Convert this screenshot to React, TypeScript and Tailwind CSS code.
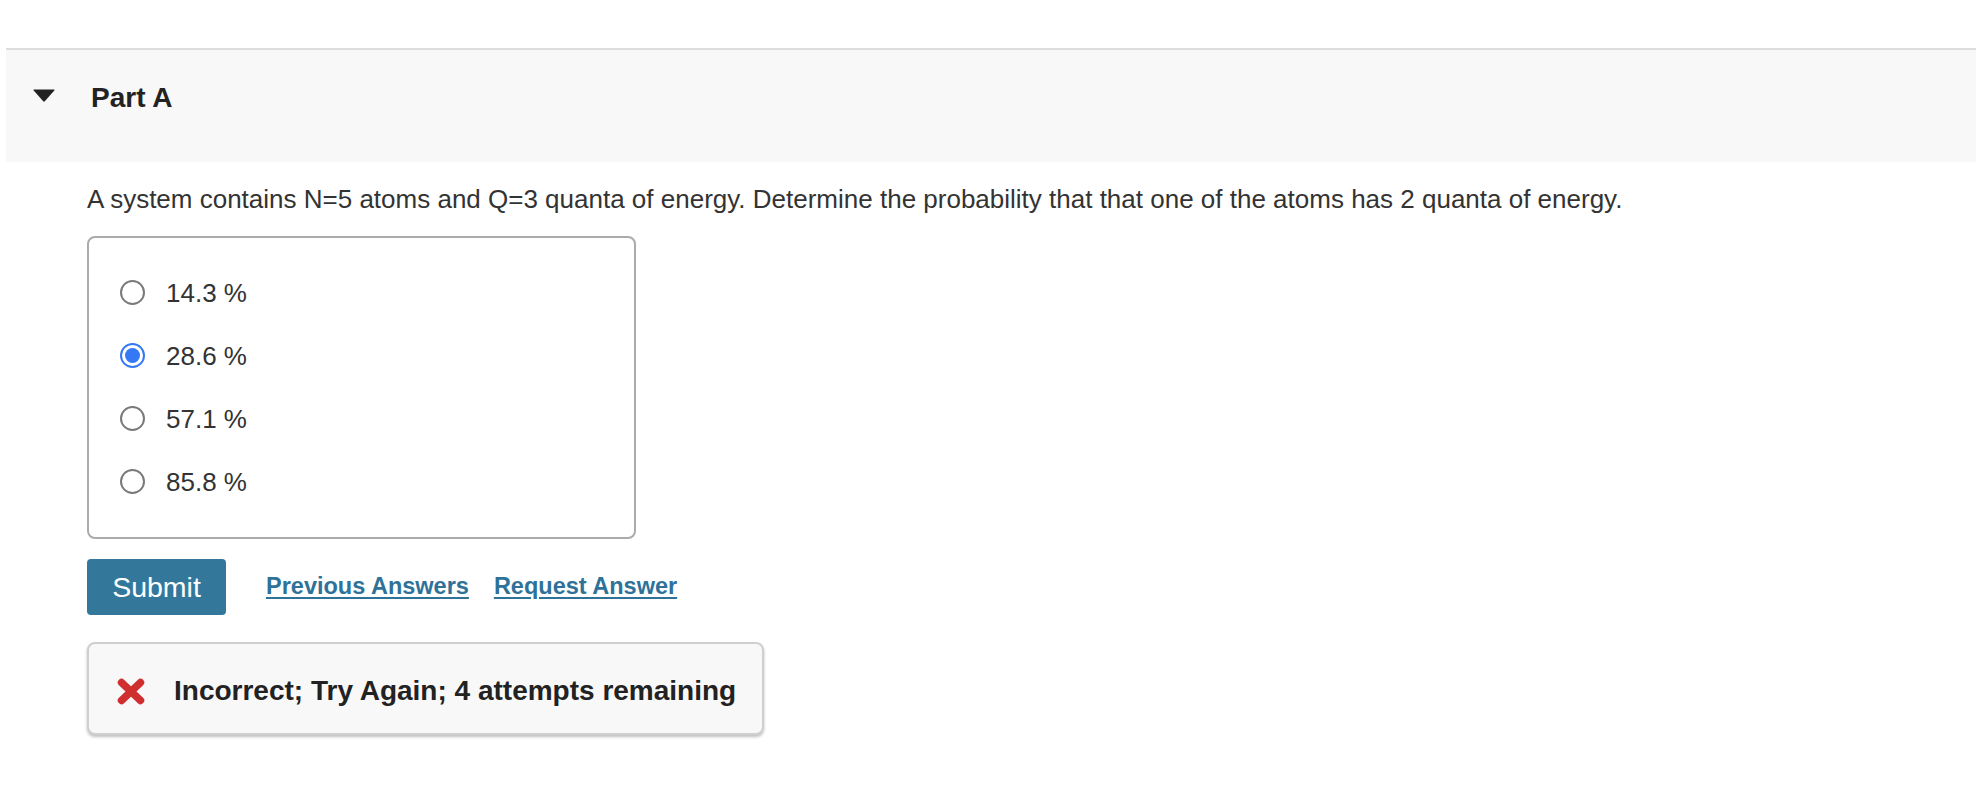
import React from "react";

const options = ["14.3 %", "28.6 %", "57.1 %", "85.8 %"];

function Radio({ checked }: { checked: boolean }) {
  if (checked) {
    return (
      <span className="flex h-[25px] w-[25px] shrink-0 items-center justify-center rounded-full border-2 border-[#3478f6] bg-white">
        <span className="h-[15px] w-[15px] rounded-full bg-[#3478f6]" />
      </span>
    );
  }
  return <span className="h-[25px] w-[25px] shrink-0 rounded-full border-2 border-[#7a7a7a] bg-white" />;
}

export default function App() {
  return (
    <div className="h-[790px] w-[1976px] bg-white pt-[48px] font-['Liberation_Sans',Arial,Helvetica,sans-serif]">
      <div className="ml-[6px] flex h-[114px] items-start border-t-2 border-[#dddddd] bg-[#f8f8f8] pt-[31px]">
        <svg className="ml-[27px] mt-[8px] shrink-0" width="22" height="13" viewBox="0 0 22 13">
          <path d="M1 0.5 L21 0.5 Q22 0.5 21.3 1.5 L11.8 12.3 Q11 13.2 10.2 12.3 L0.7 1.5 Q0 0.5 1 0.5 Z" fill="#222222" />
        </svg>
        <h2 className="ml-[36px] text-[28px] font-bold leading-[34px] text-[#222222]">Part A</h2>
      </div>

      <div className="pl-[87px] pt-[22px]">
        <p className="text-[26px] leading-[30px] text-[#333333]">
          A system contains N=5 atoms and Q=3 quanta of energy. Determine the probability that that one of the atoms has 2 quanta of energy.
        </p>

        <div className="mt-[22px] h-[303px] w-[549px] rounded-[8px] border-2 border-[#ababab] pt-[23px] pl-[31px]">
          {options.map((o, i) => (
            <div key={o} className="flex h-[63px] items-center">
              <Radio checked={i === 1} />
              <span className="ml-[21px] text-[26px] leading-[30px] text-[#333333]">{o}</span>
            </div>
          ))}
        </div>

        <div className="mt-[20px] flex items-center">
          <button className="flex h-[56px] w-[139px] items-center justify-center rounded-[4px] bg-[#33789b] text-[28.5px] leading-[32px] text-white">
            Submit
          </button>
          <div className="flex items-center pb-[3px]">
            <a className="ml-[40px] text-[23.5px] font-bold leading-[30px] text-[#2f7299] underline underline-offset-[3px] decoration-2">
              Previous Answers
            </a>
            <a className="ml-[25px] text-[23.5px] font-bold leading-[30px] text-[#2f7299] underline underline-offset-[3px] decoration-2">
              Request Answer
            </a>
          </div>
        </div>

        <div className="mt-[27px] flex h-[93px] w-[677px] items-center rounded-[8px] border-2 border-[#cfcfcf] bg-[#f8f8f8] pl-[28px] pt-[5px] shadow-[0_2px_3px_rgba(0,0,0,0.25)]">
          <svg className="shrink-0" width="28" height="27" viewBox="0 0 28 27">
            <path d="M4.5 4.5 L23.5 22.5 M23.5 4.5 L4.5 22.5" stroke="#d02f2f" strokeWidth="7.5" strokeLinecap="round" />
          </svg>
          <span className="ml-[29px] text-[28px] font-bold leading-[34px] text-[#222222]">
            Incorrect; Try Again; 4 attempts remaining
          </span>
        </div>
      </div>
    </div>
  );
}
